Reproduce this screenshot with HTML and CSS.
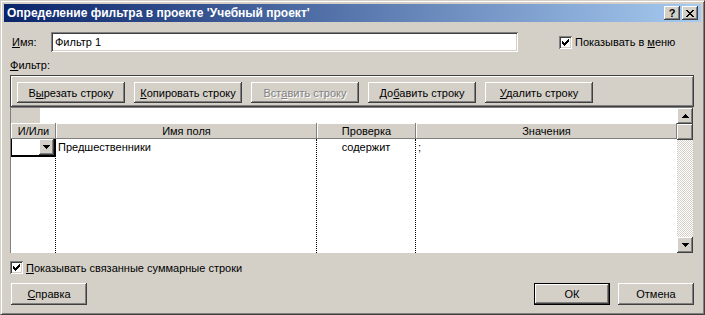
FILE: index.html
```html
<!DOCTYPE html>
<html lang="ru">
<head>
    <meta charset="UTF-8">
    <meta name="viewport" content="width=device-width, initial-scale=1.0">
    <title>Определение фильтра</title>

    <link rel="stylesheet" href="styles.css">
</head>
<body>
<div class="ventana">

    <!-- TITULO -->
    <div class="titulo">
        <span>Определение фильтра в проекте 'Учебный проект'</span>
        <div class="titulo-botones">
            <span class="tbtn">?</span>
            <span class="tbtn">
                <svg width="8" height="7" viewBox="0 0 8 7" shape-rendering="crispEdges">
                    <path d="M0 0h2v1h1v1h2v-1h1v-1h2v1h-1v1h-1v1h-1v1h1v1h1v1h1v1h-2v-1h-1v-1h-2v1h-1v1h-2v-1h1v-1h1v-1h1v-1h-1v-1h-1v-1h-1z" fill="#000"/>
                </svg>
            </span>
        </div>
    </div>

    <div class="contenido">

        <!-- NOMBRE -->
        <div class="fila-nombre">
            <span class="etiqueta-nombre"><u>И</u>мя:</span>
            <div class="campo">Фильтр 1</div>
            <label class="check check-menu">
                <span class="caja">
                    <svg width="7" height="7" viewBox="0 0 7 7" shape-rendering="crispEdges">
                        <path d="M6 0h1v3h-1v1h-1v1h-1v1h-1v1h-1v-1h-1v-1h-1v-3h1v1h1v1h1v-1h1v-1h1z" fill="#000"/>
                    </svg>
                </span>
                <span>Показывать в <u>м</u>еню</span>
            </label>
        </div>

        <div class="etiqueta-filtro"><u>Ф</u>ильтр:</div>

        <!-- BARRA DE BOTONES -->
        <div class="barra">
            <div class="boton"><span>В<u>ы</u>резать строку</span></div>
            <div class="boton"><span><u>К</u>опировать строку</span></div>
            <div class="boton desactivado"><span>Вст<u>а</u>вить строку</span></div>
            <div class="boton"><span>До<u>б</u>авить строку</span></div>
            <div class="boton"><span><u>У</u>далить строку</span></div>
        </div>

        <!-- TABLA -->
        <div class="rejilla">
            <div class="tabla">
                <div class="editor">
                    <span class="esquina"></span>
                    <span class="linea"></span>
                </div>
                <div class="cabecera">
                    <div>И/Или</div>
                    <div>Имя поля</div>
                    <div>Проверка</div>
                    <div>Значения</div>
                </div>
                <div class="cuerpo">
                    <div class="col col1">
                        <div class="combo">
                            <span class="combo-blanco"></span>
                            <span class="combo-btn">
                                <svg width="7" height="4" viewBox="0 0 7 4" shape-rendering="crispEdges"><path d="M0 0h7v1h-1v1h-1v1h-1v1h-1v-1h-1v-1h-1v-1h-1z" fill="#000"/></svg>
                            </span>
                        </div>
                    </div>
                    <div class="col"><div class="celda">Предшественники</div></div>
                    <div class="col"><div class="celda centro">содержит</div></div>
                    <div class="col ultima"><div class="celda">;</div></div>
                </div>
            </div>

            <div class="scroll">
                <div class="sbtn">
                    <svg width="7" height="4" viewBox="0 0 7 4" shape-rendering="crispEdges"><path d="M3 0h1v1h1v1h1v1h1v1h-7v-1h1v-1h1v-1h1z" fill="#000"/></svg>
                </div>
                <div class="sbtn"></div>
                <div class="pista"></div>
                <div class="sbtn">
                    <svg width="7" height="4" viewBox="0 0 7 4" shape-rendering="crispEdges"><path d="M0 0h7v1h-1v1h-1v1h-1v1h-1v-1h-1v-1h-1v-1h-1z" fill="#000"/></svg>
                </div>
            </div>
        </div>

        <label class="check check-abajo">
            <span class="caja">
                <svg width="7" height="7" viewBox="0 0 7 7" shape-rendering="crispEdges">
                    <path d="M6 0h1v3h-1v1h-1v1h-1v1h-1v1h-1v-1h-1v-1h-1v-3h1v1h1v1h1v-1h1v-1h1z" fill="#000"/>
                </svg>
            </span>
            <span><u>П</u>оказывать связанные суммарные строки</span>
        </label>

        <!-- BOTONES DE ABAJO -->
        <div class="botones-abajo">
            <div class="boton grande"><span><u>С</u>правка</span></div>
            <div class="grupo">
                <div class="boton grande defecto">ОК</div>
                <div class="boton grande">Отмена</div>
            </div>
        </div>

    </div>
</div>
</body>
</html>
```

FILE: styles.css
```css
* {
    box-sizing: border-box;
}

body {
    margin: 0;
    background-color: #d4d0c8;
    font-family: "Liberation Sans", Arial, sans-serif;
    font-size: 11px;
    color: #000;
}

u {
    text-decoration-thickness: 1px;
    text-underline-offset: 1px;
}

.ventana {
    width: 705px;
    height: 315px;
    border: 1px solid;
    border-color: #d4d0c8 #404040 #404040 #d4d0c8;
    box-shadow: inset 1px 1px #fff, inset -1px -1px #808080;
    padding: 3px;
    display: flex;
    flex-direction: column;
}

/* TITULO */
.titulo {
    height: 18px;
    flex-shrink: 0;
    background: linear-gradient(to right, #0a246a, #a6caf0);
    color: #fff;
    font-size: 12px;
    font-weight: bold;
    display: flex;
    align-items: center;
    justify-content: space-between;
    padding: 0 3px 0 3px;
}

.titulo-botones {
    display: flex;
    gap: 2px;
}

.tbtn {
    width: 16px;
    height: 14px;
    background-color: #d4d0c8;
    color: #000;
    font-size: 11px;
    font-weight: bold;
    display: flex;
    align-items: center;
    justify-content: center;
    box-shadow: inset -1px -1px #404040, inset 1px 1px #fff, inset -2px -2px #808080;
}

.contenido {
    flex: 1;
    padding: 10px 7px 0 6px;
    display: flex;
    flex-direction: column;
}

/* NOMBRE */
.fila-nombre {
    height: 20px;
    display: flex;
    align-items: center;
}

.etiqueta-nombre {
    width: 41px;
    padding-left: 2px;
}

.campo {
    width: 467px;
    height: 20px;
    background-color: #fff;
    padding: 0 4px;
    line-height: 20px;
    box-shadow: inset 1px 1px #808080, inset -1px -1px #fff, inset 2px 2px #404040, inset -2px -2px #d4d0c8;
}

.check {
    display: flex;
    align-items: center;
    gap: 3px;
    height: 13px;
}

.check-menu {
    margin-left: 41px;
}

.caja {
    width: 13px;
    height: 13px;
    background-color: #fff;
    display: flex;
    align-items: center;
    justify-content: center;
    box-shadow: inset 1px 1px #808080, inset -1px -1px #fff, inset 2px 2px #404040, inset -2px -2px #d4d0c8;
}

.etiqueta-filtro {
    margin-top: 6px;
    height: 14px;
    line-height: 14px;
}

/* BARRA */
.barra {
    margin-top: 3px;
    height: 32px;
    border: 1px solid #404040;
    box-shadow: inset 1px 1px #fff, inset -1px -1px #808080;
    padding: 6px 0 0 6px;
    display: flex;
    gap: 9px;
}

.boton {
    width: 108px;
    height: 21px;
    display: flex;
    align-items: center;
    justify-content: center;
    background-color: #d4d0c8;
    box-shadow: inset -1px -1px #404040, inset 1px 1px #fff, inset -2px -2px #808080;
}

.desactivado {
    color: #808080;
    text-shadow: 1px 1px #fff;
}

/* TABLA */
.rejilla {
    width: 683px;
    height: 146px;
    border-left: 1px solid #808080;
    border-top: 1px solid #808080;
    display: flex;
}

.tabla {
    width: 666px;
    display: flex;
    flex-direction: column;
    background-color: #fff;
}

.editor {
    height: 15px;
    display: flex;
}

.esquina {
    width: 29px;
    background-color: #d4d0c8;
}

.linea {
    flex: 1;
    background-color: #fff;
}

.cabecera,
.cuerpo {
    display: grid;
    grid-template-columns: 45px 261px 99px 261px;
}

.cabecera {
    height: 16px;
}

.cabecera div {
    background-color: #d4d0c8;
    text-align: center;
    line-height: 16px;
    box-shadow: inset -1px -1px #808080, inset 1px 1px #fff;
}

.cuerpo {
    flex: 1;
}

.col {
    border-right: 1px dotted #000;
}

.col.ultima {
    border-right: none;
}

.celda {
    height: 17px;
    line-height: 17px;
    padding-left: 2px;
}

.centro {
    text-align: center;
    padding-left: 0;
}

.combo {
    width: 45px;
    height: 18px;
    border-left: 1px solid #000;
    border-right: 2px solid #000;
    border-bottom: 2px solid #000;
    display: flex;
    background-color: #fff;
}

.combo-blanco {
    flex: 1;
}

.combo-btn {
    width: 15px;
    background-color: #d4d0c8;
    display: flex;
    align-items: center;
    justify-content: center;
    box-shadow: inset -1px -1px #404040, inset 1px 1px #fff, inset -2px -2px #808080;
}

/* SCROLL */
.scroll {
    width: 16px;
    display: flex;
    flex-direction: column;
}

.sbtn {
    height: 16px;
    flex-shrink: 0;
    background-color: #d4d0c8;
    display: flex;
    align-items: center;
    justify-content: center;
    box-shadow: inset -1px -1px #404040, inset 1px 1px #fff, inset -2px -2px #808080;
}

.pista {
    flex: 1;
    background: repeating-conic-gradient(#d4d0c8 0 25%, #fff 0 50%) 0 0 / 2px 2px;
}

/* ABAJO */
.check-abajo {
    margin-top: 8px;
}

.botones-abajo {
    margin-top: 9px;
    display: flex;
    justify-content: space-between;
    padding-left: 1px;
}

.grupo {
    display: flex;
    gap: 8px;
}

.grande {
    width: 76px;
    height: 22px;
}

.defecto {
    box-shadow: inset 0 0 0 1px #000, inset -2px -2px #404040, inset 2px 2px #fff, inset -3px -3px #808080;
}
```
